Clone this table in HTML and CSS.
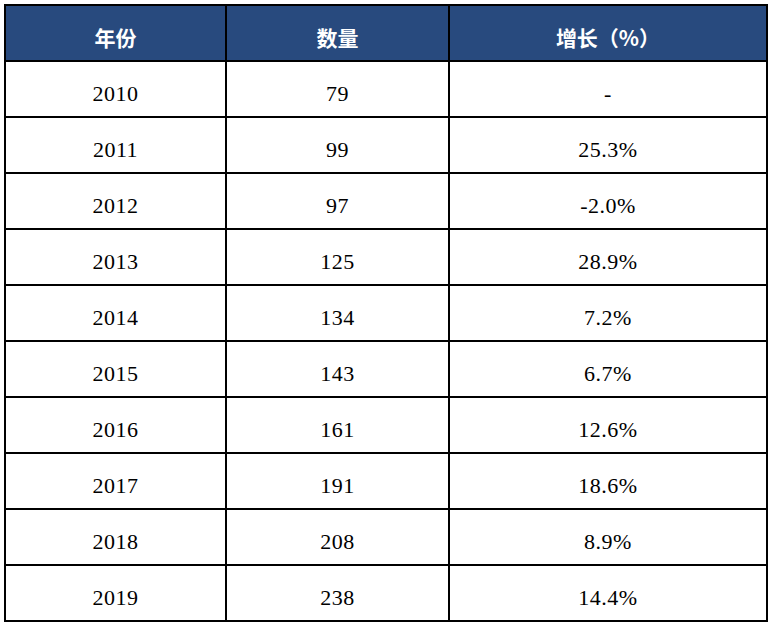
FILE: index.html
```html
<!DOCTYPE html>
<html lang="zh">
<head>
<meta charset="utf-8">
<link rel="stylesheet" href="styles.css">
</head>
<body>
<div class="wrap">
<table class="data">
  <colgroup><col class="c1"><col class="c2"><col class="c3"></colgroup>
  <thead>
    <tr><th>年份</th><th>数量</th><th>增长（%）</th></tr>
  </thead>
  <tbody>
    <tr><td>2010</td><td>79</td><td>-</td></tr>
    <tr><td>2011</td><td>99</td><td>25.3%</td></tr>
    <tr><td>2012</td><td>97</td><td>-2.0%</td></tr>
    <tr><td>2013</td><td>125</td><td>28.9%</td></tr>
    <tr><td>2014</td><td>134</td><td>7.2%</td></tr>
    <tr><td>2015</td><td>143</td><td>6.7%</td></tr>
    <tr><td>2016</td><td>161</td><td>12.6%</td></tr>
    <tr><td>2017</td><td>191</td><td>18.6%</td></tr>
    <tr><td>2018</td><td>208</td><td>8.9%</td></tr>
    <tr><td>2019</td><td>238</td><td>14.4%</td></tr>
  </tbody>
</table>
</div>
</body>
</html>
```
FILE: styles.css
```css
html, body {
  margin: 0;
  padding: 0;
  background: #ffffff;
}
.wrap {
  padding: 4px 0 0 4px;
}
.data {
  border-collapse: separate;
  border-spacing: 0;
  width: 764px;
  table-layout: fixed;
  border-top: 2px solid #000;
  border-left: 2px solid #000;
}
.c1 { width: 221px; }
.c2 { width: 223px; }
.c3 { width: 318px; }
.data th, .data td {
  border-right: 2px solid #000;
  border-bottom: 2px solid #000;
  text-align: center;
  padding: 0;
  box-sizing: border-box;
}
.data th {
  height: 56px;
  background: #284a7e;
  color: #ffffff;
  font-family: "Noto Sans CJK SC", "Noto Sans", sans-serif;
  font-weight: bold;
  font-size: 21px;
  padding-top: 8px;
}
.data td {
  height: 56px;
  color: #000;
  font-family: "Liberation Serif", "Times New Roman", serif;
  font-size: 22px;
  letter-spacing: 0.5px;
  padding-top: 9px;
}
```
